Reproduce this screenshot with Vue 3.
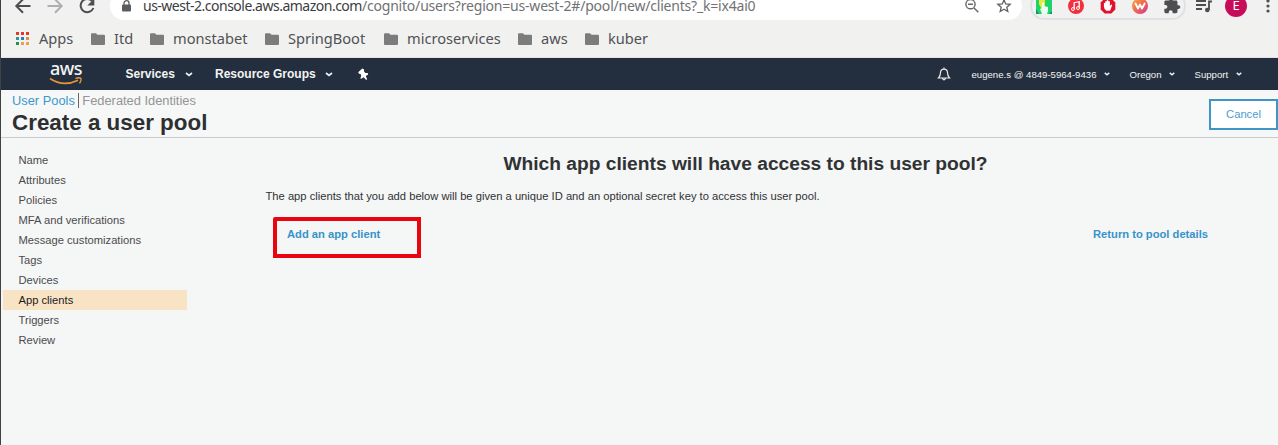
<script setup>
const bookmarks = [
  { name: 'Itd', width: 59 },
  { name: 'monstabet', width: 115 },
  { name: 'SpringBoot', width: 119 },
  { name: 'microservices', width: 134 },
  { name: 'aws', width: 67 },
  { name: 'kuber', width: 80 },
]
const dots = ['#e0392f', '#e0392f', '#e0392f', '#299a9a', '#3479b8', '#e98a45', '#23905a', '#eba04f', '#eba04f']
const steps = [
  'Name', 'Attributes', 'Policies', 'MFA and verifications', 'Message customizations',
  'Tags', 'Devices', 'App clients', 'Triggers', 'Review',
]
const current = 'App clients'
</script>

<template>
  <div class="window">
    <div class="toolbar">
      <svg class="tool" viewBox="0 0 24 24"><path d="M19.500 12H6M12 5.300L5.300 12l6.700 6.700" fill="none" stroke="#4c4e50" stroke-width="2" /></svg>
      <svg class="tool" viewBox="0 0 24 24"><path d="M4.500 12H18M12 5.300l6.700 6.700-6.700 6.700" fill="none" stroke="#adafb1" stroke-width="2" /></svg>
      <svg class="tool" viewBox="0 0 24 24"><path d="M17.200 7.200A6.600 6.600 0 1 0 18.400 14" fill="none" stroke="#4c4e50" stroke-width="2" /><path d="M19.300 4.500v7h-7z" fill="#4c4e50" /></svg>
      <div class="omnibox">
        <svg class="lock" viewBox="0 0 9 12"><path d="M2 5V3.200a2.500 2.500 0 0 1 5 0V5" fill="none" stroke="#5a5c5e" stroke-width="1.300" /><rect y="4.500" width="9" height="7" rx="1" fill="#5a5c5e" /></svg>
        <div class="url"><span class="host">us-west-2.console.aws.amazon.com</span><span class="path">/cognito/users?region=us-west-2#/pool/new/clients?_k=ix4ai0</span></div>
        <svg class="small" viewBox="0 0 16 16"><path d="M10 10l4.300 4.300M4 6.200h5" fill="none" stroke="#666" stroke-width="1.400" /><circle cx="6.500" cy="6.200" r="4.600" fill="none" stroke="#666" stroke-width="1.400" /></svg>
        <svg class="small" viewBox="0 0 16 16"><path d="M8 1.800l1.700 4.100 4.500.4-3.400 2.900 1 4.300L8 11.200l-3.800 2.300 1-4.300L1.800 6.300l4.500-.4z" fill="none" stroke="#606264" stroke-width="1.300" /></svg>
      </div>
      <div class="extensions">
        <svg viewBox="0 0 16 16"><path d="M0 0h16v16H0z" fill="#1fd36b" /><path d="M3 0h6v8l-3 4-3-6z" fill="#e8e83c" /><path d="M6 16l-2-5 2-1V5q1-1.500 2 0v3l4 1v4l-1 3z" fill="#e9fff2" /><path d="M0 11l3 5H0zM13 16l3-3v3z" fill="#13916b" /></svg>
        <svg viewBox="0 0 16 16"><circle cx="8" cy="8" r="8" fill="#f4303f" /><path d="M6.200 11V4.700l5-1v6" fill="none" stroke="#fff" stroke-width="1.300" /><circle cx="5" cy="11" r="1.500" fill="none" stroke="#fff" /><circle cx="10" cy="10" r="1.500" fill="none" stroke="#fff" /></svg>
        <svg viewBox="0 0 16 16"><path d="M4.700.5h6.600l4 4v7l-4 4H4.700l-4-4v-7z" fill="#e2102c" /><path d="M3.900 8.500V5.200q.7-.9 1.400 0V3.400q.8-.9 1.500 0v-.8q.8-1 1.600 0v.8q.8-.8 1.500.1V8l1.300-1.500q1.300.1.800 1.100L10.200 12.700H6.400Q3.900 11.200 3.900 8.500z" fill="#fff" /></svg>
        <svg viewBox="0 0 16 16"><defs><linearGradient id="warm" x1="0" y1="0" x2="1" y2="1"><stop offset="0" stop-color="#f5b23c" /><stop offset=".5" stop-color="#f06a50" /><stop offset="1" stop-color="#d22f9d" /></linearGradient></defs><circle cx="8" cy="8" r="8" fill="url(#warm)" /><path d="M3.500 5.500L6 10.500 8 6.500l2 4 2.700-5" fill="none" stroke="#fff" stroke-width="1.800" stroke-linejoin="round" stroke-linecap="round" /></svg>
        <svg viewBox="1 1 22 22"><path d="M21 11h-1.500V6.500c0-1.100-.9-2-2-2H13V3a2.500 2.500 0 0 0-5 0v1.500H3.500c-1.100 0-2 .9-2 2v4H3a2.700 2.700 0 0 1 0 5.400H1.500V20c0 1.100.9 2 2 2h4v-1.500a2.700 2.700 0 0 1 5.400 0V22h4.600c1.100 0 2-.9 2-2v-4H21a2.500 2.500 0 0 0 0-5z" fill="#4c4e50" /></svg>
      </div>
      <svg class="queue" viewBox="0 0 16 16"><path d="M0 3h10M0 7h10M0 11h6" stroke="#4c4e50" stroke-width="1.800" /><path d="M13 12V3.500h3" fill="none" stroke="#4c4e50" stroke-width="1.800" /><circle cx="11.300" cy="12" r="2.300" fill="#4c4e50" /></svg>
      <div class="avatar">E</div>
      <svg class="kebab" viewBox="0 0 4 16"><circle cx="2" cy="3" r="1.600" /><circle cx="2" cy="8" r="1.600" /><circle cx="2" cy="13" r="1.600" /></svg>
    </div>

    <div class="bookmarks">
      <div class="apps-grid"><i v-for="(c, i) in dots" :key="i" :style="{ background: c }"></i></div>
      <span class="apps">Apps</span>
      <div v-for="b in bookmarks" :key="b.name" class="bookmark" :style="{ width: b.width + 'px' }">
        <svg viewBox="0 0 14 12"><path d="M0 1.200Q0 .2 1 .2h4l1.500 1.600H13q1 0 1 1V11q0 1-1 1H1q-1 0-1-1z" fill="#7c7c7c" /></svg>
        <span>{{ b.name }}</span>
      </div>
    </div>

    <nav class="console">
      <div class="logo">
        <span>aws</span>
        <svg viewBox="0 0 34 9"><path d="M1 1.500Q14 10.500 29 3.200" fill="none" stroke="#e8953a" stroke-width="1.700" /><path d="M26.500 1.500q4-1.500 5.500 0 .5 2-1.500 4.800" fill="none" stroke="#e8953a" stroke-width="1.400" /></svg>
      </div>
      <span class="menu services">Services</span>
      <svg class="caret big" viewBox="0 0 8 5"><path d="M1 1l3 2.500L7 1" /></svg>
      <span class="menu groups">Resource Groups</span>
      <svg class="caret big" viewBox="0 0 8 5"><path d="M1 1l3 2.500L7 1" /></svg>
      <svg class="pin" viewBox="0 0 12 12"><path d="M5.200.5L1.200 4.300l.8 1.500 1.500.1.800 1.800-1 2.600 1 .4 2.200-1.400 2.800 2.600.8-.6-1.300-3.200 2.400-1.700-.4-1.300-2.300-.1-1.500-1.400.1-2.200z" fill="#fff" /></svg>
      <svg class="bell" viewBox="0 0 14 14"><path d="M1.500 11Q3.500 9 3.500 5.500 3.700 2.200 7 2.200t3.500 3.300Q10.500 9 12.500 11zM7 .5v1.700M5.500 11.500q1.500 2.600 3 0" fill="none" stroke="#eee" stroke-width="1.200" /></svg>
      <span class="account user">eugene.s @ 4849-5964-9436</span>
      <svg class="caret" viewBox="0 0 8 5"><path d="M1 1l3 2.500L7 1" /></svg>
      <span class="account region">Oregon</span>
      <svg class="caret" viewBox="0 0 8 5"><path d="M1 1l3 2.500L7 1" /></svg>
      <span class="account support">Support</span>
      <svg class="caret" viewBox="0 0 8 5"><path d="M1 1l3 2.500L7 1" /></svg>
    </nav>

    <header class="heading">
      <div>
        <div class="tabs"><a>User Pools</a><span>Federated Identities</span></div>
        <h1>Create a user pool</h1>
      </div>
      <button class="cancel">Cancel</button>
    </header>

    <div class="body">
      <ul class="steps">
        <li v-for="s in steps" :key="s" :class="{ current: s === current }">{{ s }}</li>
      </ul>
      <main>
        <h2>Which app clients will have access to this user pool?</h2>
        <p>The app clients that you add below will be given a unique ID and an optional secret key to access this user pool.</p>
        <div class="actions">
          <div class="marked"><a>Add an app client</a></div>
          <a class="return">Return to pool details</a>
        </div>
      </main>
    </div>
  </div>
</template>

<style>
body { margin: 0; overflow: hidden; }
</style>

<style scoped>
* { box-sizing: border-box; }
svg { display: block; flex: none; overflow: visible; }
span, a { white-space: nowrap; }
.window {
  width: 1278px; height: 445px; overflow: hidden;
  border-left: 1px solid #414141; background: #f5f6f6;
  font-family: "Liberation Sans", Arial, sans-serif;
}
.toolbar {
  display: flex; align-items: center; height: 28px; margin-top: -8px; padding-left: 10px;
  background: #f1f1f1; font-family: "Noto Sans", sans-serif;
}
.tool { width: 24px; height: 24px; margin-right: 8px; }
.omnibox {
  display: flex; align-items: center; width: 912px; height: 28px; margin-left: 3px;
  padding-left: 12px; border-radius: 14px; background: #fff;
}
.lock { width: 9px; height: 12px; margin-right: 12px; }
.url { width: 821px; flex: none; font-size: 14px; line-height: 28px; }
.host { letter-spacing: -.5px; color: #3b3c3e; }
.path { letter-spacing: -.2px; color: #707274; }
.small { width: 16px; height: 16px; margin-right: 16px; }
.extensions {
  display: flex; align-items: center; gap: 16px; width: 156px; height: 28px; margin-left: 8px;
  padding-left: 4px; border: 2px solid #e0e1e2; border-radius: 14px;
}
.extensions svg { width: 16px; height: 16px; }
.queue { width: 16px; height: 16px; margin-left: 10px; }
.avatar {
  width: 22px; height: 22px; margin-left: 13px; border-radius: 50%; background: #c70d59;
  color: #fff; font-size: 13px; line-height: 21px; text-align: center;
}
.kebab { width: 4px; height: 16px; margin-left: 19px; fill: #4c4e50; }

.bookmarks {
  display: flex; align-items: center; height: 38px; padding: 0 0 1px 15px;
  background: #f1f1f0; border-bottom: 1px solid #dfe4ea;
  font: 14.600px "Noto Sans", sans-serif; color: #505254;
}
.apps-grid { display: grid; grid-template-columns: repeat(3, 3px); gap: 2px; width: 13px; }
.apps-grid i { height: 3px; }
.apps { width: 52px; margin: 0 0 0 10px; }
.bookmark { display: flex; align-items: center; gap: 9px; box-sizing: content-box; }
.bookmark svg { width: 14px; height: 12px; margin-top: 1px; }

.console { display: flex; align-items: center; height: 32px; background: #232f3e; color: #f4f4f4; }
.logo { width: 34px; height: 24px; margin-left: 48px; }
.logo span { display: block; height: 15px; font: 500 18px/12px "Noto Sans", sans-serif; text-align: center; letter-spacing: -.5px; }
.logo svg { width: 34px; height: 9px; }
.menu { font-size: 12px; font-weight: bold; }
.services { width: 59px; margin-left: 42.500px; }
.groups { width: 110px; margin-left: 22.500px; }
.caret { width: 6px; height: 4px; fill: none; stroke: #eee; stroke-width: 2; }
.caret.big { width: 8px; height: 5px; stroke-width: 1.700; }
.pin { width: 12px; height: 12px; margin-left: 24px; }
.bell { width: 14px; height: 14px; margin-left: 568px; }
.account { font-size: 9.600px; }
.user { width: 132.500px; margin-left: 20.500px; }
.region { width: 39px; margin-left: 19.500px; }
.support { width: 41px; margin-left: 20px; }

.heading {
  display: flex; justify-content: space-between; height: 48px; padding: 3px 0 0 11px;
  border-bottom: 1px solid #c9cbcc; background: #f6f7f7;
}
.tabs { height: 16px; font-size: 12.850px; line-height: 15px; color: #949494; }
.tabs a { padding-right: 3px; border-right: 1px solid #666; color: #3c97cc; }
.tabs span { padding-left: 3.500px; }
h1 { margin: 0; font-size: 22.400px; line-height: 27px; color: #2d2f31; white-space: nowrap; }
.cancel {
  width: 69px; height: 31px; margin-top: 6px; padding: 0; border: 2px solid #3f95c5; background: #fff;
  font: 11.200px/25px "Liberation Sans", sans-serif; color: #4a9dce;
}
.body { display: flex; padding-top: 12px; }
.steps { width: 184px; margin: 0 0 0 2px; padding: 0; list-style: none; font-size: 11.200px; line-height: 20px; color: #4b4b4b; }
.steps li { height: 20px; padding-left: 15.500px; }
.steps .current { background: #f9e3c5; color: #1b1b1b; }
main { width: 960px; margin-left: 78.500px; color: #303234; }
h2 { margin: 0; font-size: 19.200px; line-height: 28px; text-align: center; }
p { margin: 8px 0 0; font-size: 11.200px; line-height: 20px; white-space: nowrap; }
.actions { display: flex; justify-content: space-between; padding: 11px 17.500px 0 7.500px; font-size: 11.200px; font-weight: bold; color: #3593ca; }
.marked { width: 148px; height: 41px; padding: 0 0 0 10px; border: 4px solid #e8050f; border-radius: 2px 0 0; line-height: 27px; }
.return { line-height: 35px; }
</style>
